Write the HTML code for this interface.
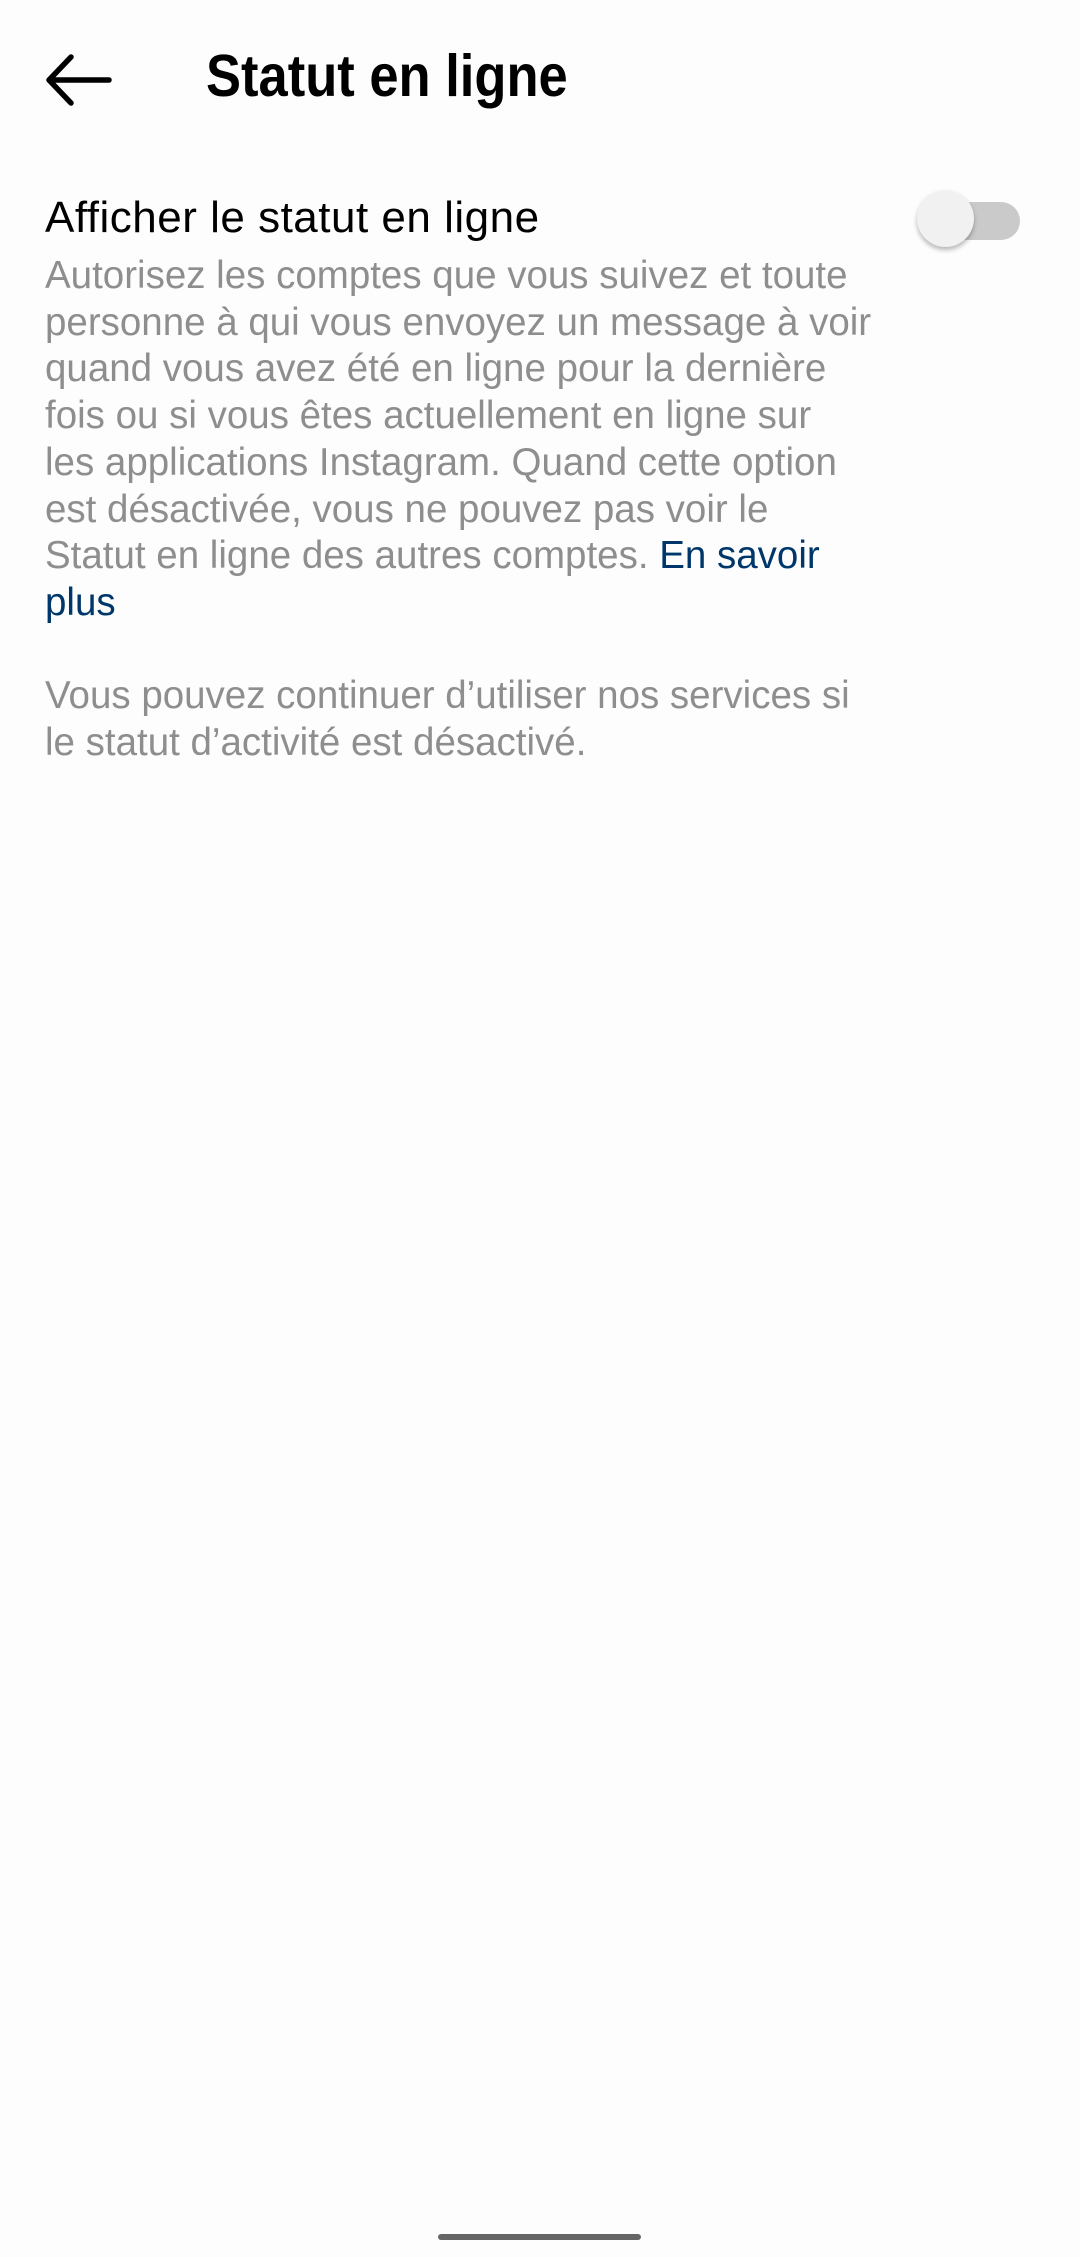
<!DOCTYPE html>
<html><head><meta charset="utf-8"><style>
html,body{margin:0;padding:0;background:#fdfdfd;}
body{width:1080px;height:2257px;position:relative;overflow:hidden;font-family:"Liberation Sans",sans-serif;}
.t{position:absolute;white-space:nowrap;}
#title{left:206px;top:41px;font-size:59px;line-height:70px;font-weight:bold;color:#000;transform:scaleX(0.89);transform-origin:left top;}
#head{left:45px;top:192px;font-size:44px;line-height:52px;color:#000;letter-spacing:0.5px;}
#body{left:45px;top:253px;font-size:38.5px;line-height:46.7px;color:#8e8e8e;}
a{color:#00376b;text-decoration:none;}
</style></head><body>
<svg style="position:absolute;left:44px;top:52px" width="72" height="56" viewBox="0 0 72 56"><path d="M27 5 L5 28 L27 51 M5 28 L65 28" fill="none" stroke="#000" stroke-width="5.5" stroke-linecap="round" stroke-linejoin="round"/></svg>
<div class="t" id="title">Statut en ligne</div>
<div class="t" id="head">Afficher le statut en ligne</div>
<div class="t" id="body">Autorisez les comptes que vous suivez et toute<br>personne à qui vous envoyez un message à voir<br>quand vous avez été en ligne pour la dernière<br>fois ou si vous êtes actuellement en ligne sur<br>les applications Instagram. Quand cette option<br>est désactivée, vous ne pouvez pas voir le<br>Statut en ligne des autres comptes. <a>En savoir</a><br><a>plus</a><br><br>Vous pouvez continuer d’utiliser nos services si<br>le statut d’activité est désactivé.</div>
<div style="position:absolute;left:922px;top:202px;width:98px;height:38px;border-radius:19px;background:#cacaca"></div>
<div style="position:absolute;left:917px;top:190px;width:57px;height:57px;border-radius:50%;background:#f1f1f1;box-shadow:0 3px 5px rgba(0,0,0,0.28)"></div>
<div style="position:absolute;left:438px;top:2234px;width:203px;height:6px;border-radius:3px;background:#666"></div>
</body></html>
